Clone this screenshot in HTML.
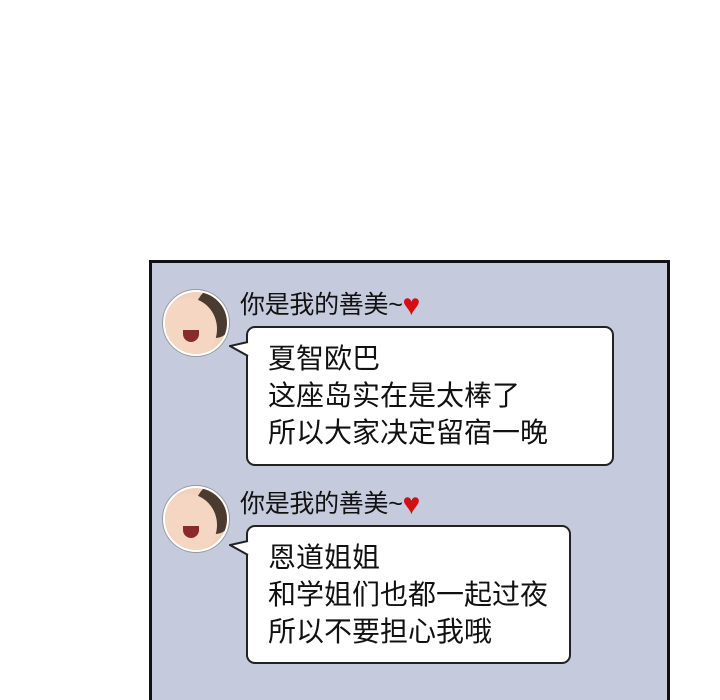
<html><head><style>
html,body{margin:0;width:720px;height:700px;overflow:hidden}
body{background:#fff;position:relative;font-family:"Liberation Sans","Noto Sans CJK SC",sans-serif}
.panel{position:absolute;left:149px;top:260px;width:515px;height:440px;border:3px solid #111;border-bottom:none;background:#c5cbdc}
.av{position:absolute;width:62px;height:62px;border-radius:50%;background:#f2d2bd;border:2px solid #fff;box-shadow:0 0 0 1px #999;overflow:hidden}
.hair{position:absolute;left:30px;top:-4px;width:40px;height:50px;border-radius:50%;background:#4a3a30}
.face{position:absolute;left:-6px;top:6px;width:58px;height:62px;border-radius:50%;background:#f4d6c2}
.mouth{position:absolute;left:18px;top:38px;width:16px;height:12px;border-radius:0 0 10px 10px;background:#8a2b2b}
.name{position:absolute;font-size:25px;color:#111;line-height:26px;letter-spacing:-0.3px;white-space:nowrap}
.name b{color:#d40f14;font-weight:normal;font-size:30px;vertical-align:-2px}
.bub{position:absolute;background:#fff;border:2px solid #222;border-radius:9px;font-size:28px;line-height:37px;padding:12px 0 0 20px;box-sizing:border-box;color:#111;white-space:nowrap}
.tail{position:absolute;width:20px;height:20px}
</style></head><body>
<div class="panel"></div>
<div class="av" style="left:163px;top:290px"><div class="hair"></div><div class="face"></div><div class="mouth"></div></div>
<div class="name" style="left:240px;top:292px">你是我的善美~<b>♥</b></div>
<div class="bub" style="left:246px;top:326px;width:368px;height:140px">夏智欧巴<br>这座岛实在是太棒了<br>所以大家决定留宿一晚</div>
<svg class="tail" style="left:229px;top:340px" viewBox="0 0 20 20"><path d="M19 2 L1 6 L19 16" fill="#fff" stroke="#222" stroke-width="2"/></svg>
<div class="av" style="left:163px;top:486px"><div class="hair"></div><div class="face"></div><div class="mouth"></div></div>
<div class="name" style="left:240px;top:491px">你是我的善美~<b>♥</b></div>
<div class="bub" style="left:246px;top:525px;width:325px;height:139px">恩道姐姐<br>和学姐们也都一起过夜<br>所以不要担心我哦</div>
<svg class="tail" style="left:229px;top:539px" viewBox="0 0 20 20"><path d="M19 2 L1 6 L19 16" fill="#fff" stroke="#222" stroke-width="2"/></svg>
</body></html>
